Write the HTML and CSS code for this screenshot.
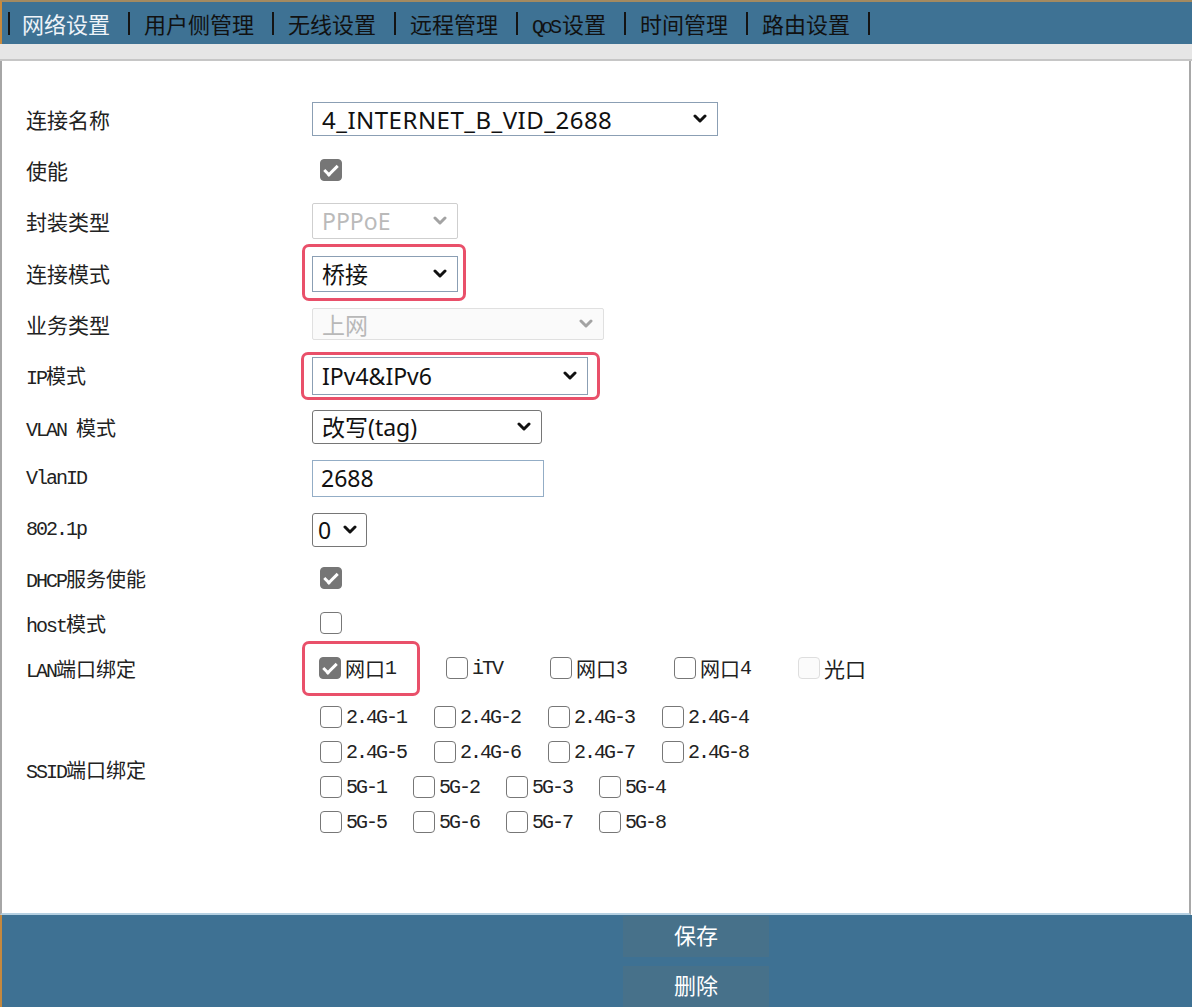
FILE: index.html
```html
<!DOCTYPE html>
<html lang="zh-CN">
<head>
    <meta charset="UTF-8">
    <meta name="viewport" content="width=device-width, initial-scale=1.0">
    <title>网络设置</title>
    <link rel="stylesheet" href="styles.css">
</head>
<body>
    <div class="nav">
        <span class="sep first"></span><span class="tab on">网络设置</span>
        <span class="sep"></span><span class="tab">用户侧管理</span>
        <span class="sep"></span><span class="tab">无线设置</span>
        <span class="sep"></span><span class="tab">远程管理</span>
        <span class="sep"></span><span class="tab"><span class="en">QoS</span>设置</span>
        <span class="sep"></span><span class="tab">时间管理</span>
        <span class="sep"></span><span class="tab">路由设置</span>
        <span class="sep"></span>
    </div>
    <div class="strip"></div>

    <div class="main">
        <form class="form" id="wanForm">
            <div class="row">
                <div class="lbl">连接名称</div>
                <div class="ctl">
                    <span class="sel blue big" style="width: 406px; height: 34px;">
                        <select id="wanName"><option>4_INTERNET_B_VID_2688</option></select>
                        <svg class="arr" viewBox="0 0 14 9"><path d="M2 2l5 5 5-5"/></svg>
                    </span>
                </div>
            </div>
            <div class="row">
                <div class="lbl">使能</div>
                <div class="ctl"><input type="checkbox" class="box" checked></div>
            </div>
            <div class="row">
                <div class="lbl">封装类型</div>
                <div class="ctl">
                    <span class="sel off" style="width: 146px; height: 36px;">
                        <select disabled><option>PPPoE</option></select>
                        <svg class="arr" viewBox="0 0 14 9"><path d="M2 2l5 5 5-5"/></svg>
                    </span>
                </div>
            </div>
            <div class="row">
                <div class="lbl">连接模式</div>
                <div class="ctl">
                    <span class="mark m-mode">
                        <span class="sel blue" style="width: 146px; height: 36px;">
                            <select><option>桥接</option><option>路由</option></select>
                            <svg class="arr" viewBox="0 0 14 9"><path d="M2 2l5 5 5-5"/></svg>
                        </span>
                    </span>
                </div>
            </div>
            <div class="row">
                <div class="lbl">业务类型</div>
                <div class="ctl">
                    <span class="sel off faint" style="width: 292px; height: 32px;">
                        <select disabled><option>上网</option></select>
                        <svg class="arr" viewBox="0 0 14 9"><path d="M2 2l5 5 5-5"/></svg>
                    </span>
                </div>
            </div>
            <div class="row">
                <div class="lbl mono"><span class="en">IP</span>模式</div>
                <div class="ctl">
                    <span class="mark m-ip">
                        <span class="sel blue" style="width: 276px; height: 38px;">
                            <select><option>IPv4&amp;IPv6</option><option>IPv4</option><option>IPv6</option></select>
                            <svg class="arr" viewBox="0 0 14 9"><path d="M2 2l5 5 5-5"/></svg>
                        </span>
                    </span>
                </div>
            </div>
            <div class="row">
                <div class="lbl mono"><span class="en">VLAN </span>模式</div>
                <div class="ctl">
                    <span class="sel gray" style="width: 230px; height: 34px;">
                        <select><option>改写(tag)</option></select>
                        <svg class="arr" viewBox="0 0 14 9"><path d="M2 2l5 5 5-5"/></svg>
                    </span>
                </div>
            </div>
            <div class="row">
                <div class="lbl mono"><span class="en">VlanID</span></div>
                <div class="ctl"><input type="text" class="txt" value="2688"></div>
            </div>
            <div class="row">
                <div class="lbl mono"><span class="en">802.1p</span></div>
                <div class="ctl">
                    <span class="sel gray small" style="width: 55px; height: 34px;">
                        <select><option>0</option></select>
                        <svg class="arr" viewBox="0 0 14 9"><path d="M2 2l5 5 5-5"/></svg>
                    </span>
                </div>
            </div>
            <div class="row s">
                <div class="lbl mono"><span class="en">DHCP</span>服务使能</div>
                <div class="ctl"><input type="checkbox" class="box" checked></div>
            </div>
            <div class="row s">
                <div class="lbl mono"><span class="en">host</span>模式</div>
                <div class="ctl"><input type="checkbox" class="box"></div>
            </div>
            <div class="row s">
                <div class="lbl mono"><span class="en">LAN</span>端口绑定</div>
                <div class="ctl">
                    <span class="mark m-lan">
                        <label class="opt"><input type="checkbox" class="box" checked>网口<span class="en">1</span></label>
                    </span>
                    <label class="opt"><input type="checkbox" class="box"><span class="en">iTV</span></label>
                    <label class="opt"><input type="checkbox" class="box">网口<span class="en">3</span></label>
                    <label class="opt"><input type="checkbox" class="box">网口<span class="en">4</span></label>
                    <label class="opt sans"><input type="checkbox" class="box" disabled>光口</label>
                </div>
            </div>
            <div class="row ssid">
                <div class="lbl mono"><span class="en">SSID</span>端口绑定</div>
                <div class="ctl">
                    <div class="line w24">
                        <label class="opt"><input type="checkbox" class="box"><span class="en">2.4G-1</span></label>
                        <label class="opt"><input type="checkbox" class="box"><span class="en">2.4G-2</span></label>
                        <label class="opt"><input type="checkbox" class="box"><span class="en">2.4G-3</span></label>
                        <label class="opt"><input type="checkbox" class="box"><span class="en">2.4G-4</span></label>
                    </div>
                    <div class="line w24">
                        <label class="opt"><input type="checkbox" class="box"><span class="en">2.4G-5</span></label>
                        <label class="opt"><input type="checkbox" class="box"><span class="en">2.4G-6</span></label>
                        <label class="opt"><input type="checkbox" class="box"><span class="en">2.4G-7</span></label>
                        <label class="opt"><input type="checkbox" class="box"><span class="en">2.4G-8</span></label>
                    </div>
                    <div class="line w5">
                        <label class="opt"><input type="checkbox" class="box"><span class="en">5G-1</span></label>
                        <label class="opt"><input type="checkbox" class="box"><span class="en">5G-2</span></label>
                        <label class="opt"><input type="checkbox" class="box"><span class="en">5G-3</span></label>
                        <label class="opt"><input type="checkbox" class="box"><span class="en">5G-4</span></label>
                    </div>
                    <div class="line w5">
                        <label class="opt"><input type="checkbox" class="box"><span class="en">5G-5</span></label>
                        <label class="opt"><input type="checkbox" class="box"><span class="en">5G-6</span></label>
                        <label class="opt"><input type="checkbox" class="box"><span class="en">5G-7</span></label>
                        <label class="opt"><input type="checkbox" class="box"><span class="en">5G-8</span></label>
                    </div>
                </div>
            </div>
        </form>
    </div>

    <div class="foot">
        <button type="submit" form="wanForm" class="btn">保存</button>
        <button type="button" class="btn">删除</button>
    </div>
</body>
</html>
```

FILE: styles.css
```css
body { margin: 0; font-family: "Noto Sans CJK SC", sans-serif; background: #fff; color: #1e1e1e; }

/* top menu */
.nav { height: 42px; background: #3e7294; border-top: 2px solid #a48a60; border-left: 2px solid #c98a3c; padding-left: 6px; display: flex; align-items: center; font-size: 22px; color: #111; white-space: nowrap; }
.nav .sep { width: 2px; height: 23px; background: #141414; margin: 0 14px 0 18px; }
.nav .sep.first { margin-left: 0; margin-right: 12px; }
.nav .tab.on { color: #eef3f8; }
.nav .en { font-family: "Liberation Mono", monospace; font-size: 20px; letter-spacing: -3px; margin-right: 3px; }
.strip { height: 15px; background: #e6e6e6; border-bottom: 2px solid #c6c6c6; }

/* form area */
.main { box-sizing: border-box; height: 854px; border-left: 2px solid #a6a6a6; border-right: 2px solid #a8a8a8; border-bottom: 2px solid #b5d0e2; margin-right: 1px; padding-top: 32px; }
.row { display: flex; align-items: center; height: 51.4px; }
.row.s { height: 45px; }
.row.ssid { height: auto; margin-top: 9.4px; }
.lbl { box-sizing: border-box; width: 310px; padding-left: 24px; font-size: 21px; color: #222; }
.lbl.mono, .opt { font-family: "Liberation Mono", "Noto Sans CJK SC", monospace; font-size: 20px; }
.en { font-family: "Liberation Mono", monospace; font-size: 20px; letter-spacing: -2px; }
.ctl { display: flex; align-items: center; }
.row.ssid .ctl { flex-direction: column; align-items: flex-start; }

/* drop-down boxes */
.sel { position: relative; display: inline-block; box-sizing: border-box; border: 1px solid #8b9fb4; background: #fff; }
.sel select { appearance: none; -webkit-appearance: none; width: 100%; height: 100%; border: none; outline: none; background: transparent; padding: 0 30px 0 9px; font-family: "Noto Sans", "Noto Sans CJK SC", sans-serif; font-size: 23px; color: #111; }
.sel.big select { font-size: 24px; letter-spacing: 0.5px; }
.sel .arr { position: absolute; right: 10px; top: 50%; width: 14px; height: 9px; margin-top: -5px; pointer-events: none; }
.sel .arr path { fill: none; stroke: #111; stroke-width: 3; stroke-linecap: round; stroke-linejoin: round; }
.sel.gray { border-color: #767676; border-radius: 3px; }
.sel.small select { padding-left: 5px; padding-right: 0; }
.sel.small .arr { right: 9px; }
.sel.off { border-color: #cfcfcf; border-radius: 2px; }
.sel.off select { color: #9d9d9d; }
.sel.off .arr path { stroke: #a3a3a3; }
.sel.faint { border-color: #e0e0e0; background: #fafafa; }

.txt { box-sizing: border-box; width: 232px; height: 37px; border: 1.5px solid #93adc6; padding: 0 8px; font-family: "Noto Sans", sans-serif; font-size: 23px; color: #111; outline: none; }

/* checkboxes */
.box { appearance: none; -webkit-appearance: none; position: relative; box-sizing: border-box; width: 22px; height: 22px; margin: 0 4px 0 8px; border: 1.5px solid #777; border-radius: 4px; background: #fff; flex: none; }
.box:checked { background: #767676; border-color: #767676; }
.box:checked::after { content: ''; position: absolute; left: 6px; top: 2px; width: 5px; height: 11px; border: solid #fff; border-width: 0 3px 3px 0; transform: rotate(45deg); }
.box:disabled { border-color: #dedede; background: #fbfbfb; }
.opt { display: inline-flex; align-items: center; color: #222; margin-right: 40px; }
.opt.sans { font-family: "Noto Sans CJK SC", sans-serif; font-size: 21px; }
.line { display: flex; align-items: center; height: 35px; }
.line .opt { margin-right: 0; }
.line.w24 .opt { width: 114px; }
.line.w5 .opt { width: 93px; }

/* red highlight frames */
.mark { display: inline-flex; align-items: center; border: 3px solid #e9506a; border-radius: 7px; }
.m-mode { margin-left: -10px; padding: 9px 5px 6px 7px; }
.m-ip { margin-left: -11px; padding: 2px 9px 2px 8px; }
.m-lan { margin-left: -10px; margin-right: 18px; height: 49px; padding-left: 6px; }
.m-lan .opt { margin-right: 22px; }

/* bottom buttons */
.foot { height: 92px; background: #3e7193; border-left: 2px solid #c4883e; padding-left: 621px; display: flex; flex-direction: column; gap: 9px; }
.btn { width: 146px; height: 41px; margin-top: 1px; border: none; background: #47718a; color: #fff; font-family: "Noto Sans CJK SC", sans-serif; font-size: 22px; padding: 0 0 5px; cursor: pointer; }
.btn + .btn { margin-top: 0; }
```
